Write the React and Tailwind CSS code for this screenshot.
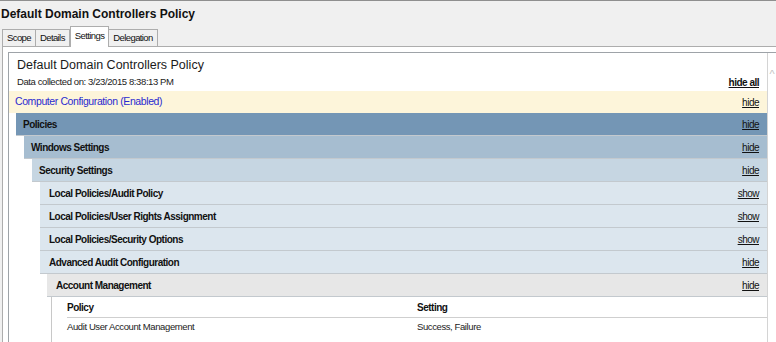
import React from "react";

const rows = [
  { label: "Policies", indent: "ml-[7px]", pad: "pl-[7px]", bg: "bg-[#7496b5]", link: "hide" },
  { label: "Windows Settings", indent: "ml-[15px]", pad: "pl-[7px]", bg: "bg-[#a6bdd0]", link: "hide" },
  { label: "Security Settings", indent: "ml-[23px]", pad: "pl-[7px]", bg: "bg-[#c6d6e2]", link: "hide" },
  { label: "Local Policies/Audit Policy", indent: "ml-[31px]", pad: "pl-[9px]", bg: "bg-[#dce6ee]", link: "show" },
  { label: "Local Policies/User Rights Assignment", indent: "ml-[31px]", pad: "pl-[9px]", bg: "bg-[#dce6ee]", link: "show" },
  { label: "Local Policies/Security Options", indent: "ml-[31px]", pad: "pl-[9px]", bg: "bg-[#dce6ee]", link: "show" },
  { label: "Advanced Audit Configuration", indent: "ml-[31px]", pad: "pl-[9px]", bg: "bg-[#dce6ee]", link: "hide" },
  { label: "Account Management", indent: "ml-[38px]", pad: "pl-[9px]", bg: "bg-[#e7e7e7]", link: "hide" },
];

const tabs = ["Scope", "Details", "Settings", "Delegation"];

const Tab = ({ label, active }) =>
  active ? (
    <div className="relative z-10 -mb-px h-[21px] px-[4px] pt-[2px] bg-white border border-b-0 border-[#adadad] text-[9.5px] tracking-[-0.6px] text-[#111]">
      {label}
    </div>
  ) : (
    <div className="h-[17px] px-[4px] flex items-center bg-[#f0f0f0] border border-b-0 border-l-0 first:border-l border-[#adadad] text-[9.5px] tracking-[-0.6px] text-[#111]">
      {label}
    </div>
  );

const Row = ({ row }) => (
  <div
    className={`${row.indent} ${row.bg} h-[23px] flex items-center justify-between border-b border-[#c3c9ce] ${row.pad} pr-[8px]`}
  >
    <span className="text-[10px] font-bold tracking-[-0.5px] text-[#111]">{row.label}</span>
    <span className="text-[10px] tracking-[-0.5px] underline text-[#111]">{row.link}</span>
  </div>
);

const App = () => {
  return (
    <div
      className="w-[776px] h-[342px] overflow-hidden bg-[#f0f0f0] border-t border-[#8f8f8f] flex flex-col"
      style={{ fontFamily: '"Liberation Sans", Arial, sans-serif' }}
    >
      <div className="h-[25px] flex items-center pl-[1px] text-[12px] font-bold text-[#111]">
        Default Domain Controllers Policy
      </div>

      <div className="h-[20px] flex items-end pl-[2px]">
        {tabs.map((t) => (
          <Tab key={t} label={t} active={t === "Settings"} />
        ))}
      </div>

      <div className="flex-1 ml-[2px] bg-white border-l border-t border-[#adadad] pl-[5px] pt-[5px] flex">
        <div className="flex-1 flex border-l border-t border-[#9ea3a8]">
          <div className="w-[758px] flex flex-col">
            <div className="mt-[4px] h-[17px] pl-[8px] text-[12.5px] leading-[17px] text-[#1a1a1a]">
              Default Domain Controllers Policy
            </div>
            <div className="h-[17px] flex items-center justify-between pl-[8px] pr-[8px]">
              <span className="text-[9.5px] tracking-[-0.4px] text-[#222]">
                Data collected on: 3/23/2015 8:38:13 PM
              </span>
              <span className="text-[10px] font-bold tracking-[-0.5px] underline text-[#111]">hide all</span>
            </div>
            <div className="h-[22px] flex items-center justify-between bg-[#fdf5da] pl-[6px] pr-[8px]">
              <span className="text-[10.5px] tracking-[-0.4px] text-[#2a2ad0]">Computer Configuration (Enabled)</span>
              <span className="text-[10px] tracking-[-0.5px] underline text-[#111]">hide</span>
            </div>

            {rows.map((row) => (
              <Row key={row.label} row={row} />
            ))}

            <div className="ml-[42px] flex-1 border-l border-[#c8c8c8]">
              <div className="ml-[15px] h-[21px] flex items-end pb-[2px] border-b border-[#cfcfcf] text-[10px] font-bold tracking-[-0.5px] text-[#111]">
                <span className="w-[350px]">Policy</span>
                <span>Setting</span>
              </div>
              <div className="ml-[15px] h-[19px] flex items-center text-[9.5px] tracking-[-0.4px] text-[#222]">
                <span className="w-[350px]">Audit User Account Management</span>
                <span>Success, Failure</span>
              </div>
            </div>
          </div>

          <div className="flex-1 border-l border-[#d4d4d4] bg-white flex justify-center pt-[16px]">
            <span className="text-[11px] leading-none text-[#c4c4c4]">^</span>
          </div>
        </div>
      </div>
    </div>
  );
};

export default App;
